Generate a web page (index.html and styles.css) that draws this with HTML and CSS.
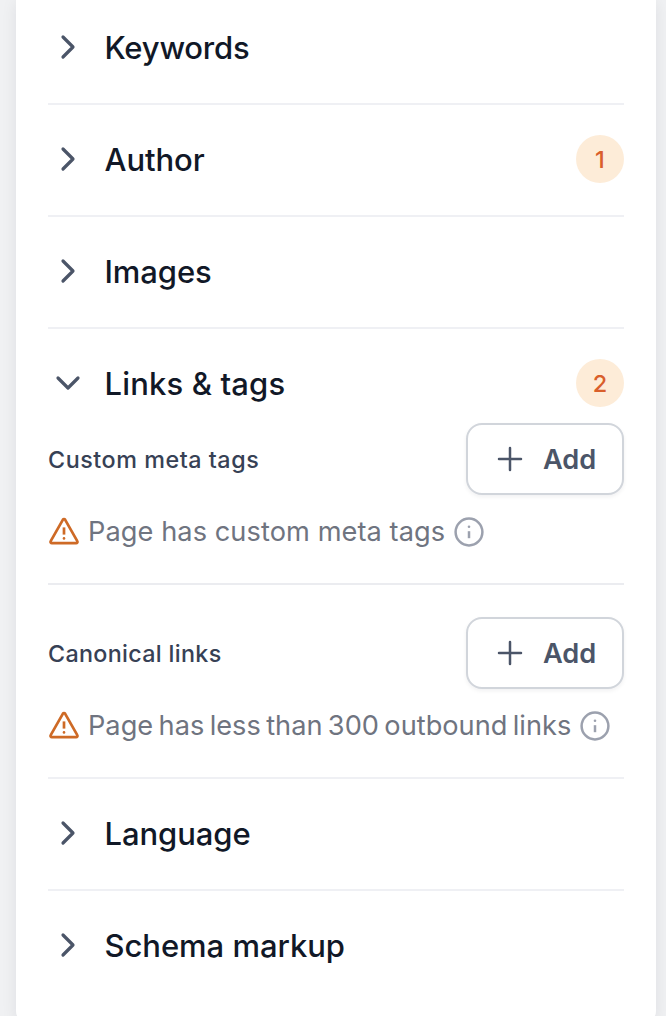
FILE: index.html
```html
<!DOCTYPE html>
<html lang="en"><head><meta charset="utf-8"><title>Page settings</title><link rel="stylesheet" href="styles.css"></head>
<body>
<svg class="defs" width="0" height="0"><defs>
<symbol id="chevron" viewBox="0 0 40 40"><path d="M15 10l10 10-10 10"/></symbol>
<symbol id="down" viewBox="0 0 40 40"><path d="M10 15l10 10 10-10"/></symbol>
<symbol id="plus" viewBox="0 0 28 28"><path d="M14 3v22M3 14h22"/></symbol>
<symbol id="warning" viewBox="0 0 32 32"><path d="M14.8 4.8L2.7 26.2c-.6 1 .1 2 1.2 2h24.2c1.1 0 1.8-1 1.2-2L17.2 4.8a1.4 1.4 0 0 0-2.4 0z"/><path class="mark" d="M16 12.4v7.2"/><circle class="dot" cx="16" cy="23.4" r="1.3"/></symbol>
<symbol id="info" viewBox="0 0 30 30"><circle cx="15" cy="15" r="13.4"/><path class="mark" d="M15 14.2v7"/><circle class="dot" cx="15" cy="9.7" r="1.3"/></symbol>
</defs></svg>
<main class="panel">
<section class="row"><svg class="chevron"><use href="#chevron"/></svg><h2 class="title keywords">Keywords</h2></section>
<section class="row"><svg class="chevron"><use href="#chevron"/></svg><h2 class="title author">Author</h2><span class="badge">1</span></section>
<section class="row"><svg class="chevron"><use href="#chevron"/></svg><h2 class="title images">Images</h2></section>
<section class="expanded">
<div class="row-open"><svg class="chevron"><use href="#down"/></svg><h2 class="title links">Links &amp; tags</h2><span class="badge">2</span></div>
<div class="group">
<div class="group-head"><h3 class="label meta">Custom meta tags</h3><button class="add"><svg class="plus"><use href="#plus"/></svg><span class="add-label">Add</span></button></div>
<p class="notice"><svg class="warning"><use href="#warning"/></svg><span class="meta-note">Page has custom meta tags</span><svg class="info"><use href="#info"/></svg></p>
</div>
<div class="group canonical-group">
<div class="group-head"><h3 class="label canonical">Canonical links</h3><button class="add"><svg class="plus"><use href="#plus"/></svg><span class="add-label">Add</span></button></div>
<p class="notice"><svg class="warning"><use href="#warning"/></svg><span class="link-note">Page has less than 300 outbound links</span><svg class="info"><use href="#info"/></svg></p>
</div>
</section>
<section class="row"><svg class="chevron"><use href="#chevron"/></svg><h2 class="title language">Language</h2></section>
<section class="row last"><svg class="chevron"><use href="#chevron"/></svg><h2 class="title schema">Schema markup</h2></section>
</main></body></html>
```

FILE: styles.css
```css
* { box-sizing: border-box; }
body { margin: 0; height: 1016px; overflow: hidden; background: #f0f1f3; font-family: Inter, sans-serif; }
h2, h3, p { margin: 0; }
svg { fill: none; stroke: currentColor; stroke-linecap: round; stroke-linejoin: round; flex: none; }
.defs { display: none; }
.panel { width: 640px; height: 1023px; margin-left: 16px; padding: 0 32px; background: #fff; border-radius: 0 0 12px 12px; box-shadow: 0 2px 16px rgb(16 24 40 / 8%); overflow: hidden; }
.row { height: 112px; padding-bottom: 2px; display: flex; align-items: center; border-bottom: 2px solid #eff0f4; }
.panel > .row:first-child { height: 105px; padding-bottom: 9px; }
.row-open { height: 94px; padding-top: 14px; display: flex; align-items: center; }
.last { border-color: transparent; }
.chevron { width: 40px; height: 40px; stroke-width: 3.2; color: #4b5568; }
.title { margin: 2px 0 0 16.5px; font-size: 31px; line-height: 40px; font-weight: 500; color: #111827; white-space: nowrap; }
.author { letter-spacing: -.08px; }
.keywords { letter-spacing: -.22px; }
.images { letter-spacing: -.08px; }
.links { letter-spacing: .15px; }
.language { letter-spacing: -.08px; }
.schema { letter-spacing: -.04px; }
.badge { width: 48px; height: 48px; margin-left: auto; border-radius: 50%; display: grid; place-items: center; background: #fdecd8; color: #d95f2b; font-size: 23.5px; font-weight: 500; }
.group { height: 162px; border-bottom: 2px solid #ebecf0; }
.canonical-group { height: 194px; padding-top: 32px; border-color: #eff0f4; }
.group-head { height: 72px; display: flex; align-items: center; justify-content: space-between; }
.label { margin-top: 2px; font-size: 23.3px; line-height: 32px; font-weight: 500; color: #374155; white-space: nowrap; }
.meta { letter-spacing: .55px; }
.canonical { letter-spacing: .33px; }
.add { width: 158px; height: 72px; border: 2px solid #d1d5db; border-radius: 16px; background: #fff; box-shadow: 0 2px 4px rgb(16 24 40 / 6%); display: flex; align-items: center; justify-content: flex-start; gap: 19px; padding: 0 0 0 28px; font: 600 27.2px/40px Inter, sans-serif; color: #4b5568; }
.add-label { margin-top: 2px; }
.plus { width: 28px; height: 28px; stroke-width: 2.5; }
.notice { height: 40px; margin-top: 17px; display: flex; align-items: center; color: #6f7480; font-size: 27.2px; line-height: 40px; white-space: nowrap; }
.meta-note { letter-spacing: .09px; word-spacing: -.1px; }
.link-note { word-spacing: -2.25px; }
.warning { width: 32px; height: 32px; margin: -2px 8px 0 0; color: #ce6a26; stroke-width: 2.7; }
.info { width: 30px; height: 30px; margin-left: 9px; color: #9ca1ae; stroke-width: 2.5; }
.mark { stroke-linecap: butt; }
.dot { fill: currentColor; stroke: none; }
```
